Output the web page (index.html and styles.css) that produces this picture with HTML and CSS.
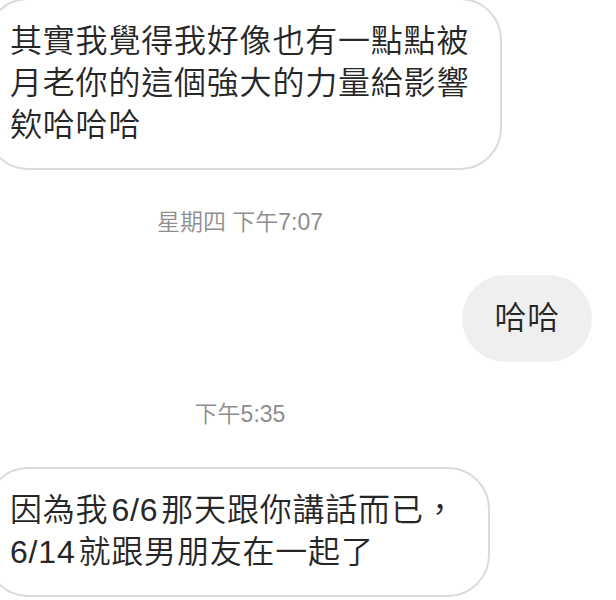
FILE: index.html
```html
<!DOCTYPE html>
<html lang="zh-Hant">
<head>
    <meta charset="UTF-8">
    <meta name="viewport" content="width=device-width, initial-scale=1.0">
    <title>Chat</title>
    <link rel="stylesheet" href="styles.css">
</head>
<body>

    <!-- Conversation -->
    <div class="chat">
        <div class="bubble them first">
            其實我覺得我好像也有一點點被<br>
            月老你的這個強大的力量給影響<br>
            欸哈哈哈
        </div>

        <div class="stamp">星期四 下午7:07</div>

        <div class="bubble me">哈哈</div>

        <div class="stamp">下午5:35</div>

        <div class="bubble them">
            因為我<span class="latin">6/6</span>那天跟你講話而已，<br>
            <span class="latin lead">6/14</span>就跟男朋友在一起了
        </div>
    </div>

</body>
</html>
```

FILE: styles.css
```css
body {
    margin: 0;
    padding: 0;
    background-color: #ffffff;
    color: #262626;
    font-family: "Liberation Sans", "Noto Sans CJK TC", sans-serif;
    font-weight: 350;
    overflow: hidden;
}

.chat {
    display: flex;
    flex-direction: column;
    width: 616px;
    height: 600px;
}

/* Bubbles */
.bubble {
    font-size: 32px;
    line-height: 42px;
    letter-spacing: 0.8px;
    border-radius: 42px;
    padding: 20px 31px 22px 22px;
    box-sizing: border-box;
    white-space: nowrap;
}

.bubble.them {
    align-self: flex-start;
    margin-left: -14px;
    border: 2px solid #dbdbdb;
    background-color: #ffffff;
}

.bubble.first {
    margin-top: -2px;
}

.bubble.me {
    align-self: flex-end;
    margin-right: 24px;
    padding: 22px 32px 23px 32px;
    border-radius: 44px;
    background-color: #efefef;
}

.latin {
    margin: 0 3px;
}

.latin.lead {
    margin-left: 0;
}

/* Timestamps */
.stamp {
    width: 480px;
    text-align: center;
    font-size: 23px;
    line-height: 28px;
    color: #8e8e8e;
    margin: 38px 0 39px;
}
```
